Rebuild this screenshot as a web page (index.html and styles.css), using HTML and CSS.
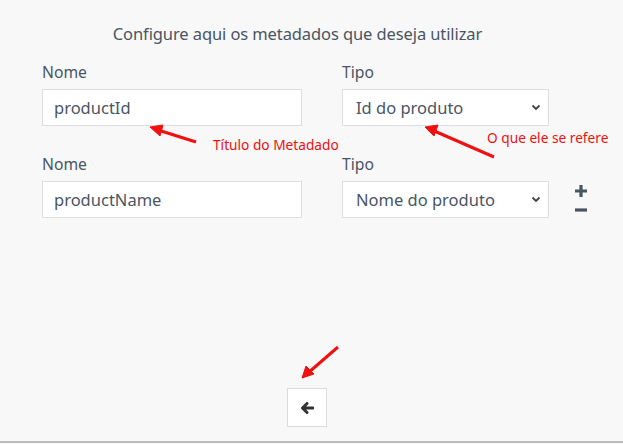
FILE: index.html
```html
<!DOCTYPE html>
<html lang="pt">
<head>
<meta charset="utf-8">
<link rel="stylesheet" href="styles.css">
</head>
<body>
<div class="page">
  <h1 class="title">Configure aqui os metadados que deseja utilizar</h1>
  <div class="rows">
    <div class="row">
      <div class="field name">
        <label class="label">Nome</label>
        <div class="input">productId</div>
      </div>
      <div class="field type">
        <label class="label">Tipo</label>
        <div class="select"><span>Id do produto</span>
          <svg class="chev" width="10" height="7" viewBox="0 0 10 7"><path d="M1.5 1.5 L5 5 L8.5 1.5" fill="none" stroke="#444" stroke-width="1.8"/></svg>
        </div>
      </div>
    </div>
    <div class="row">
      <div class="field name">
        <label class="label">Nome</label>
        <div class="input">productName</div>
      </div>
      <div class="field type">
        <label class="label">Tipo</label>
        <div class="select"><span>Nome do produto</span>
          <svg class="chev" width="10" height="7" viewBox="0 0 10 7"><path d="M1.5 1.5 L5 5 L8.5 1.5" fill="none" stroke="#444" stroke-width="1.8"/></svg>
        </div>
      </div>
      <div class="actions">
        <svg width="14" height="14" viewBox="0 0 14 14"><path d="M7 1 V13 M1 7 H13" stroke="#4a5562" stroke-width="3.2"/></svg>
        <svg width="14" height="6" viewBox="0 0 14 6"><path d="M1 3 H13" stroke="#4a5562" stroke-width="3.2"/></svg>
      </div>
    </div>
  </div>
  <div class="footer">
    <button class="back">
      <svg width="14" height="12" viewBox="0 0 14 12"><path d="M7 1.5 L2.5 6 L7 10.5 M2.5 6 H13" fill="none" stroke="#333" stroke-width="3" stroke-linecap="round" stroke-linejoin="round"/></svg>
    </button>
  </div>
  <div class="bottom-line"></div>

  <span class="note note1">Título do Metadado</span>
  <span class="note note2">O que ele se refere</span>
  <svg class="arrows" width="623" height="444" viewBox="0 0 623 444">
    <g stroke="#f01010" stroke-width="3" fill="#f01010">
      <line x1="196" y1="142" x2="158" y2="130"/>
      <polygon points="150,127 163,125 160,136" stroke-width="1"/>
      <line x1="494" y1="157" x2="432" y2="130"/>
      <polygon points="425,127 438,125 434,136" stroke-width="1"/>
      <line x1="338" y1="347" x2="308" y2="373"/>
      <polygon points="302,378 306,366 314,374" stroke-width="1"/>
    </g>
  </svg>
</div>
</body>
</html>
```
FILE: styles.css
```css
html, body {
  margin: 0;
  padding: 0;
  background: #f8f8f8;
}
body {
  font-family: "Noto Sans", "Open Sans", sans-serif;
  color: #4a5562;
}
.page {
  position: relative;
  width: 623px;
  height: 444px;
  overflow: hidden;
}
.title {
  margin: 0;
  padding-top: 23px;
  padding-right: 28px;
  font-size: 16.5px;
  font-weight: 400;
  line-height: 22px;
  text-align: center;
  letter-spacing: -0.1px;
}
.rows {
  display: flex;
  flex-direction: column;
  gap: 28px;
  padding-left: 42px;
  margin-top: 17px;
}
.row {
  display: flex;
  align-items: flex-end;
}
.field {
  display: flex;
  flex-direction: column;
  gap: 7px;
}
.name { width: 260px; margin-right: 40px; }
.type { width: 207px; }
.label {
  font-size: 15.7px;
  line-height: 20px;
}
.input, .select {
  box-sizing: border-box;
  height: 37px;
  background: #fff;
  border: 1px solid #dcdfe2;
  font-size: 16.5px;
  display: flex;
  align-items: center;
  padding-left: 11px;
}
.select {
  justify-content: space-between;
  padding-right: 7px;
  padding-left: 13px;
}
.actions {
  display: flex;
  flex-direction: column;
  align-items: center;
  gap: 9px;
  margin-left: 25px;
  margin-bottom: 5px;
}
.footer {
  display: flex;
  justify-content: center;
  padding-top: 170px;
  padding-right: 9px;
}
.back {
  width: 40px;
  height: 39px;
  background: #fff;
  border: 1px solid #dcdcdc;
  display: flex;
  align-items: center;
  justify-content: center;
  padding: 0;
}
.bottom-line {
  position: absolute;
  left: 0;
  right: 0;
  top: 441px;
  height: 2px;
  background: #bcbcbc;
}
.note {
  position: absolute;
  color: #f01010;
  font-size: 13.7px;
  line-height: 16px;
}
.note1 { left: 213px; top: 137px; }
.note2 { left: 487px; top: 130px; }
.arrows {
  position: absolute;
  left: 0;
  top: 0;
  pointer-events: none;
}
```
